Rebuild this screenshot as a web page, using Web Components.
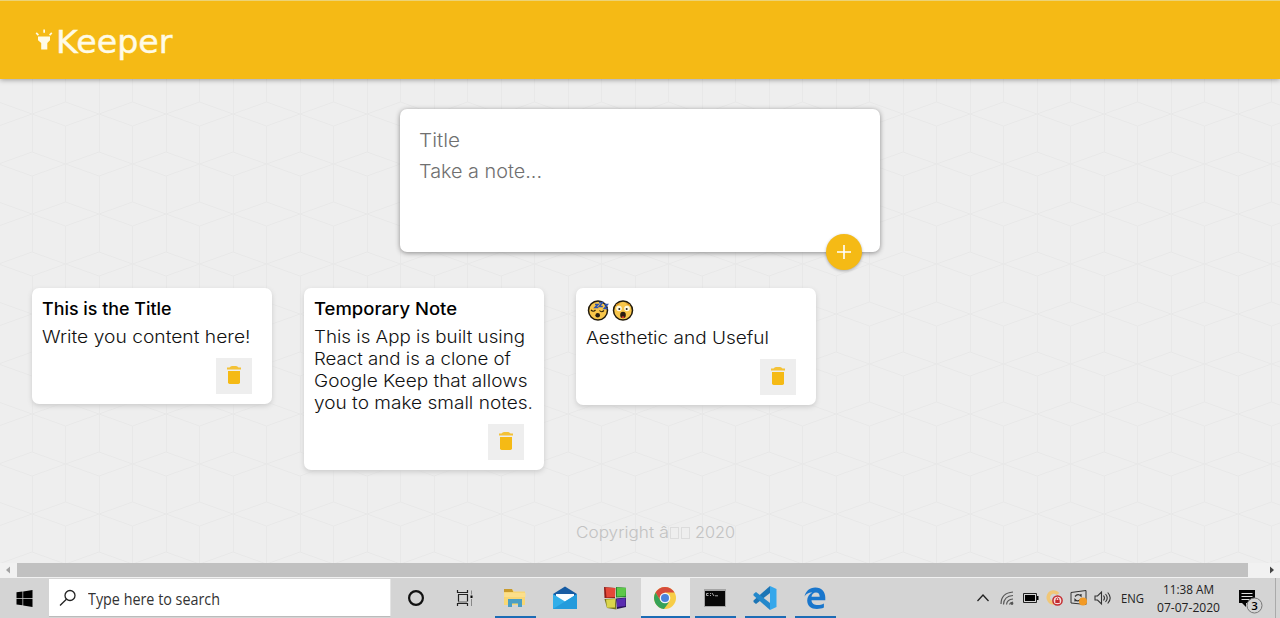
<!DOCTYPE html>
<html lang="en">
<head>
<meta charset="utf-8">
<title>Keeper</title>
<style>
html,body{margin:0;height:100%;overflow:hidden;background:#eee}
body{font-family:Inter,"Open Sans",sans-serif;color:#000}
</style>
</head>
<body>
<keeper-desktop>
  <keeper-header><fit-text width="116.5">Keeper</fit-text></keeper-header>
  <note-form></note-form>
  <note-grid>
    <note-card>
      <fit-text slot="title" width="129.5">This is the Title</fit-text>
      <fit-text width="208.5">Write you content here!</fit-text>
    </note-card>
    <note-card>
      <fit-text slot="title" width="143">Temporary Note</fit-text>
      <fit-text width="211">This is App is built using</fit-text>
      <fit-text width="197">React and is a clone of</fit-text>
      <fit-text width="213.5">Google Keep that allows</fit-text>
      <fit-text width="219">you to make small notes.</fit-text>
    </note-card>
    <note-card style="--title-height:23px">
      <face-pair slot="title"></face-pair>
      <fit-text width="183">Aesthetic and Useful</fit-text>
    </note-card>
  </note-grid>
  <keeper-footer></keeper-footer>
  <scroll-track slot="bottom"></scroll-track>
  <task-bar slot="bottom"></task-bar>
</keeper-desktop>
<script>
const define = (name, html, setup) => {
  const t = document.createElement('template');
  t.innerHTML = html;
  customElements.define(name, class extends HTMLElement {
    constructor() {
      super();
      this.attachShadow({mode: 'open'}).append(t.content.cloneNode(true));
    }
    connectedCallback() { if (setup) setup(this); }
  });
};

define('keeper-desktop', `<style>
:host{display:flex;flex-direction:column;height:618px;width:1280px;overflow:hidden}
main{flex:1;display:flex;flex-direction:column;min-height:0;
background:#eee url("data:image/svg+xml,%3Csvg xmlns='http://www.w3.org/2000/svg' width='67' height='100'%3E%3Cg fill='none' stroke='%23e8e8e8' stroke-width='1'%3E%3Cpath d='M0 25L33.5 13L67 25L33.5 37ZM0 63L33.5 75L0 87M67 63L33.5 75L67 87M33.5 37V100M33.5 0V13M0.5 0V63M0.5 87V100'/%3E%3C/g%3E%3C/svg%3E") 32px 89px}
</style><main><slot></slot></main><slot name="bottom"></slot>`);

define('keeper-header', `<style>
:host{display:flex;flex:none;height:79px;box-sizing:border-box;padding:0 0 0 35px;background:#f5ba15;border-top:1px solid #ecd376;box-shadow:0 1px 5px rgba(0,0,0,.35);align-items:center;color:#fffbe6}
svg{width:18px;height:22px;margin-right:2.5px;margin-top:-1px;flex:none}
::slotted(*){font:31.5px/44px "DejaVu Sans",sans-serif;margin-top:4px;-webkit-text-stroke:.4px #fffbe6}
</style>
<svg viewBox="0 0 18 22" fill="#fffbe6"><path d="M3 7.5h12v3.8l-2.7 2.7v6.6H6.2V14L3 11.3z"/><path d="M8.3.6h1.7v3.2H8.3zM.6 4.5l1.2-1.2 2.2 2.2-1.2 1.2zM17.4 4.5l-1.2-1.2L14 5.5l1.2 1.2z"/></svg>
<slot></slot>`);

define('note-form', `<style>
:host{display:block;flex:none;width:480px;height:143px;margin:30px auto 0;box-sizing:border-box;padding:18px 19px;background:#fff;border-radius:7px;box-shadow:0 1px 5px #8a8989;position:relative;font:300 18.8px/28px Inter,sans-serif;color:#707070}
.n{margin-top:3px}
button{position:absolute;right:18px;bottom:-18px;width:36px;height:36px;border:0;border-radius:50%;padding:0;background:#f5ba15;box-shadow:0 1px 3px rgba(0,0,0,.3);display:grid;place-items:center}
svg{width:24px;height:24px}
</style><fit-text width="41">Title</fit-text><fit-text class="n" width="123">Take a note...</fit-text>
<button><svg viewBox="0 0 24 24"><path fill="#fff" d="M19 12.8h-6.2V19h-1.6v-6.2H5v-1.6h6.2V5h1.6v6.2H19z"/></svg></button>`);

define('note-grid', `<style>:host{display:flex;flex:none;align-items:flex-start;gap:32px;margin:36px 32px 0;height:182px}</style><slot></slot>`);

define('note-card', `<style>
:host{display:flex;flex-direction:column;width:240px;box-sizing:border-box;padding:10px;background:#fff;border-radius:7px;box-shadow:0 2px 5px #ccc;font:300 17px/22px Inter,sans-serif;color:#111}
h1{margin:0 0 6px;font:500 17px/22px Inter,sans-serif;color:#000;height:var(--title-height,22px)}
button{align-self:flex-end;margin:10px 10px 0 0;width:36px;height:36px;border:0;padding:0;background:#eee;display:grid;place-items:center}
svg{width:24px;height:24px;margin-top:-2px}
</style><h1><slot name="title"></slot></h1><div><slot></slot></div>
<button><svg viewBox="0 0 24 24" fill="#f5ba15"><path d="M6 8h12v11.3q0 1.700-1.700 1.700H7.700Q6 21 6 19.300z"/><path d="M5 4.500h2.500q1-1.500 2.500-1.500h4q1.500 0 2.500 1.500H19v2H5z" opacity=".85"/></svg></button>`);

define('face-pair', `<style>:host{display:flex;gap:2.500px;padding:2px 0 0 1px}svg{width:22px;height:22px}</style>
<svg viewBox="0 0 22 22"><circle cx="11" cy="10.500" r="9.500" fill="#f8c64a" stroke="#211a0c" stroke-width="1.500"/><path d="M4 10q2.300 2.500 4.500 0M12.500 10.500q2 2.500 4.500 0" fill="none" stroke="#332408" stroke-width="1.200"/><ellipse cx="10.700" cy="15.300" rx="2.300" ry="2.200" fill="#271d12"/><path d="M8 4.500h3L8 7.500h3.300M12 2.500h3.500l-3.300 4h3.600M17 4.500h3.500l-3.300 4h3.500" fill="none" stroke="#3053ad" stroke-width="1.500"/></svg>
<svg viewBox="0 0 22 22"><circle cx="11" cy="10.500" r="9.500" fill="#f8c64a" stroke="#211a0c" stroke-width="1.500"/><path d="M4 5.200l3.500-1.700M14.500 3.500L18 5.200" stroke="#d38c20" stroke-width="1.300"/><circle cx="7" cy="8.500" r="2.800" fill="#fff9df"/><circle cx="15" cy="8.500" r="2.800" fill="#fff9df"/><circle cx="7.300" cy="9" r="1" fill="#222"/><circle cx="14.700" cy="9" r="1" fill="#222"/><ellipse cx="11" cy="15" rx="2.800" ry="3.200" fill="#2a1b10"/><path d="M9.300 17q1.700-1.500 3.400 0L12 18h-2z" fill="#d83b2d"/></svg>`);

define('keeper-footer', `<style>
:host{display:flex;flex:none;justify-content:flex-start;margin:51px 0 0 576px;height:24px;align-items:center;font:300 15.500px/24px Inter,sans-serif;color:#c2c2c2}
i{width:7px;height:10px;margin-right:2px;box-sizing:content-box;border:1px solid #dcdcdc}
.a{margin-left:5px;margin-right:1px}.y{margin-left:3px}
</style><fit-text width="78">Copyright</fit-text><fit-text class="a" width="10">â</fit-text><i></i><i></i><fit-text class="y" width="40">2020</fit-text>`);

define('scroll-track', `<style>
:host{display:flex;flex:none;height:15px;box-sizing:border-box;background:#f1f1f1;align-items:center}
b{flex:1;height:14px;background:#c1c1c1;align-self:flex-start}
svg{height:15px;flex:none}
</style><svg width="17" viewBox="0 0 17 15"><path d="M10 3.500v7L6 7z" fill="#a3a3a3"/></svg><b></b><svg width="32" viewBox="0 0 32 15"><path d="M22 3.500v7L26 7z" fill="#444"/></svg>`);

define('task-icon', `<style>
:host{display:grid;flex:none;width:50px;height:40px;place-items:center;position:relative}
:host([open])::after{content:"";position:absolute;left:5px;right:4px;bottom:0;height:2px;background:#1c6cb5}
:host([active]){background:linear-gradient(90deg,transparent 1px,#eee 1px)}
:host([active])::after{left:1px;right:0}
</style><slot></slot>`);

define('task-bar', `<style>
:host{display:flex;flex:none;height:40px;background:#d4d4d4;font-family:"Open Sans",sans-serif;color:#222;overflow:hidden}
svg{display:block;overflow:visible}
.start{width:49px;display:grid;place-items:center}
.search{width:342px;height:38px;margin-top:1px;box-sizing:border-box;background:#fff;border-right:1px solid #e4e4e4;border-bottom:1px solid #bbb;display:flex;align-items:center;padding-left:10px;font-size:15.500px;color:#333}
.search svg{margin-right:12px}.search fit-text{margin-top:3px}
.tray{margin-left:auto;display:flex;align-items:center}
.tray>svg{width:24px;height:24px}
.lang{width:36px;padding-left:6px;box-sizing:border-box;font-size:12px}
.clock{width:75px;display:flex;flex-direction:column;align-items:center;font-size:12px;line-height:18px;padding-top:1px}
.edge{width:4px;height:40px;border-left:1px solid #aaa}
.badge{font:600 11.500px "Open Sans",sans-serif}
</style>
<div class="start"><svg width="17" height="17" viewBox="0 0 17 17"><path d="M.5 2.300L6.500 1.500v6.500h-6zM7.200 1.400L16.500 0v8H7.200zM.5 8.800h6v6.500l-6-.8zM7.200 8.800h9.300V17l-9.300-1.500z"/></svg></div>
<div class="search"><svg width="17" height="18" viewBox="0 0 17 18" fill="none" stroke="#222" stroke-width="1.300"><circle cx="11" cy="6.500" r="5"/><path d="M7.400 10.200L1 16.500"/></svg><fit-text width="132">Type here to search</fit-text></div>
<task-icon><svg width="18" height="18" viewBox="0 0 18 18"><circle cx="9" cy="9" r="6.900" fill="none" stroke="#111" stroke-width="2.200"/></svg></task-icon>
<task-icon style="width:49px"><svg width="20" height="18" viewBox="1.500 0 20 18"><path d="M3.500 12h9v3h-9z" fill="#999"/><path d="M2.500 1v2.500h10V1M3.500 5.500v7M12.500 5.500v7M3 5.500h10M2.500 17v-2.500h10V17" fill="none" stroke="#222" stroke-width="1.200" transform="translate(.5 0)"/><path d="M17 1.500v4M17 10v7" stroke="#888"/><path d="M16 6.500h2v2.500h-2z"/></svg></task-icon>
<task-icon open><svg width="22" height="20" viewBox="0 0 22 20"><path d="M0 1h8l2 2.500h11V17H0z" fill="#f8d775"/><path d="M0 1h8l1.200 3H0z" fill="#c99b2c"/><path d="M0 5h21.500v4H0z" fill="#fbdf8b"/><path d="M4 19v-8h14v8h-4v-3.500H8V19z" fill="#4b9fc4"/></svg></task-icon>
<task-icon><svg width="24" height="24" viewBox="0 0 24 24"><path d="M0 8L12 .5 24 8v5H0z" fill="#155ba3"/><path d="M3 8h18v7l-9 3-9-3z" fill="#f8fcff"/><path d="M0 8l12 7.500L24 8v15H0z" fill="#31aee9"/><path d="M24 8v15H0l12-7.500z" fill="#239bdc"/></svg></task-icon>
<task-icon><svg width="24" height="24" viewBox="0 0 24 24"><path d="M1 1l11 1v10L1.500 12z" fill="#8f1d18"/><path d="M13 1l10 .8V11l-10 .5z" fill="#26872c"/><path d="M1.500 13l11-.5 1 11L4 22z" fill="#77751d"/><path d="M13 12.500l10-1V21l-9 2z" fill="#291358"/><path d="M2.500 1.500l10 .5-.5 9-8.500.5z" fill="#e44838"/><path d="M14 1.500l9 .5-.500 8-8.500.5z" fill="#5dc748"/><path d="M3 13.500l9-.5v8.500l-8 .3z" fill="#dbd54b"/><path d="M14 13l8.500-1V20l-8.500 1z" fill="#5a2cb0"/></svg></task-icon>
<task-icon open active><svg width="22" height="22" viewBox="0 0 22 22"><circle cx="11" cy="11" r="11" fill="#f7cd47"/><path d="M1.500 5.500A11 11 0 0 1 20.500 5.500H11L6.200 13.500z" fill="#d64b3c"/><path d="M1.500 5.500L6.500 13.700 11 16l4-.8L10 22A11 11 0 0 1 1.500 5.500z" fill="#36a257"/><circle cx="11" cy="11" r="5.300" fill="#f4f6fa"/><circle cx="11" cy="11" r="4" fill="#4a82dc"/></svg></task-icon>
<task-icon open><svg width="22" height="18" viewBox="0 0 22 18"><path d="M0 0h22v18H0z" fill="#a5a5a5"/><path d="M1 2h20v15H1z" fill="#080808"/><path d="M2.500 4.500h2M2.500 4.500v2h2M6 4.500h1M6 6.500h1M8 4l2 3M11 6.800h3" stroke="#bbb" stroke-width=".9" fill="none"/></svg></task-icon>
<task-icon open><svg width="24" height="24" viewBox="0 0 24 24"><path d="M17 0v7L3 18 .5 16v-1.500z" fill="#1c75b5"/><path d="M17 24v-7L3 6 .5 8v1.500z" fill="#2388cb"/><path d="M17 0l6.500 3v18L17 24z" fill="#35a7eb"/></svg></task-icon>
<task-icon open><svg width="22" height="22" viewBox="0 0 22 22"><path d="M.5 9.800C1.500 4 5.500.4 11.300.4 18 .4 21.300 5 21.300 10.500v2.800H7.500c.2 3.500 3 4.800 6.200 4.800 2.400 0 4.400-.7 6.200-1.700v4.200c-2 1-4.400 1.400-7 1.400-6 0-9.700-3.400-9.700-8.500 0-3.700 2-6.600 5.200-8C4 5.500 1.800 7.200.5 9.800zM7.500 9.700h8.200c0-2.600-1.300-4.200-3.700-4.200S7.800 7.200 7.500 9.700z" fill="#1976cc"/></svg></task-icon>
<div class="tray">
<svg viewBox="0 0 24 24"><path d="M6.500 15L12 9l5.500 6" fill="none" stroke="#222" stroke-width="1.300"/></svg>
<svg viewBox="0 0 24 24" fill="none" stroke="#555" stroke-width="1.200"><path d="M6 18Q6 7 18 6M8.500 18.500Q9 10 18 9.500M11.500 18.500Q12 13.500 18 13M14.500 18.500Q15 16.500 18 16"/><circle cx="17" cy="17.500" r=".8" fill="#222"/></svg>
<svg viewBox="0 0 24 24"><path d="M4.500 7.500h13v9h-13z" fill="none" stroke="#222"/><path d="M6 9h10v6H6zM18 10h1.500v4H18z"/></svg>
<svg viewBox="0 0 24 24"><path d="M11 17A5.500 5.500 0 1 1 15 8" fill="none" stroke="#f1c777" stroke-width="3.500"/><circle cx="14.500" cy="14.500" r="4.600" fill="#f4dddd" stroke="#c42b2f" stroke-width="1.500"/><path d="M12.300 14h4.400v3h-4.400z" fill="#c42b2f"/><path d="M13.200 14v-1.300q1.300-1.800 2.600 0V14" fill="none" stroke="#c42b2f"/></svg>
<svg viewBox="0 0 24 24"><path d="M4 6.500l15-2v14l-15-1.500z" fill="none" stroke="#333"/><path d="M8 10.500q3-3.500 6-.5V8M14 13q-3 3.500-6 .5v2" fill="none" stroke="#333" stroke-width="1.200"/><circle cx="16" cy="15.500" r="4" fill="#f29a25"/></svg>
<svg viewBox="0 0 24 24" fill="none" stroke="#333" stroke-width="1.100"><path d="M4 10h2.500L10.500 6v12L6.500 14H4zM12.500 9.500q2 2.500 0 5M14.500 8q3.500 4 0 8M16.700 6.500q5 5.500 0 11"/></svg>
<div class="lang"><fit-text width="23">ENG</fit-text></div>
<div class="clock"><fit-text width="51">11:38 AM</fit-text><fit-text width="63">07-07-2020</fit-text></div>
<svg style="width:49px;height:40px" viewBox="0 0 49 40"><path d="M13 12h16v13H20v4l-4-4h-3z" fill="#050505"/><path d="M15.500 15.500h11M15.500 18.500h11M15.500 21.500h8" stroke="#ddd"/><circle cx="28.500" cy="27.500" r="7.500" fill="#d4d4d4" stroke="#777"/><text class="badge" x="25.300" y="31.700">3</text></svg>
<div class="edge"></div>
</div>`);

/* One line of text, widened or narrowed to the given width. Defined last, so
   that the fonts its containers pass down are in place when it measures. */
define('fit-text', `<style>:host{display:block;white-space:nowrap}span{display:inline-block;transform-origin:0 50%}</style><span><slot></slot></span>`, el => {
  const span = el.shadowRoot.querySelector('span');
  const width = +el.getAttribute('width');
  const natural = span.getBoundingClientRect().width;
  el.style.width = width + 'px';
  if (natural) span.style.transform = 'scaleX(' + width / natural + ')';
});
</script>
</body>
</html>
